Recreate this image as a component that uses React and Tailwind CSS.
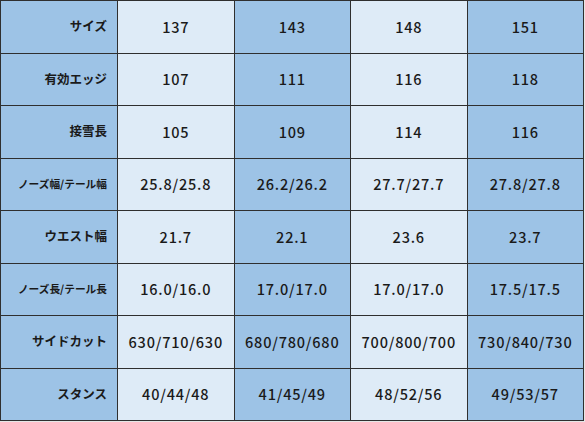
import React from "react";

const rows = [
  { label: "サイズ", values: ["137", "143", "148", "151"] },
  { label: "有効エッジ", values: ["107", "111", "116", "118"] },
  { label: "接雪長", values: ["105", "109", "114", "116"] },
  { label: "ノーズ幅/テール幅", small: true, values: ["25.8/25.8", "26.2/26.2", "27.7/27.7", "27.8/27.8"] },
  { label: "ウエスト幅", values: ["21.7", "22.1", "23.6", "23.7"] },
  { label: "ノーズ長/テール長", small: true, values: ["16.0/16.0", "17.0/17.0", "17.0/17.0", "17.5/17.5"] },
  { label: "サイドカット", values: ["630/710/630", "680/780/680", "700/800/700", "730/840/730"] },
  { label: "スタンス", values: ["40/44/48", "41/45/49", "48/52/56", "49/53/57"] },
];

const font = { fontFamily: '"Noto Sans CJK JP", "Noto Sans", sans-serif' };

export default function App() {
  return (
    <div className="w-[585px] h-[422px] bg-[#e6e6e6]" style={font}>
      <table className="w-[584px] h-[421px] border-collapse table-fixed text-[#1a1a1a]">
        <tbody>
          {rows.map((r) => (
            <tr key={r.label}>
              <td
                className={`w-[117px] border-[1.5px] border-[#2f2f2f] bg-[#9dc3e6] pr-[10px] text-right font-bold whitespace-nowrap ${
                  r.small ? "text-[10.7px]" : "text-[12.5px]"
                }`}
              >
                {r.label}
              </td>
              {r.values.map((v, i) => (
                <td
                  key={i}
                  className={`border-[1.5px] border-[#2f2f2f] text-center text-[14.5px] font-medium tracking-[0.8px] ${
                    i % 2 === 0 ? "bg-[#deebf7]" : "bg-[#9dc3e6]"
                  }`}
                >
                  {v}
                </td>
              ))}
            </tr>
          ))}
        </tbody>
      </table>
    </div>
  );
}
